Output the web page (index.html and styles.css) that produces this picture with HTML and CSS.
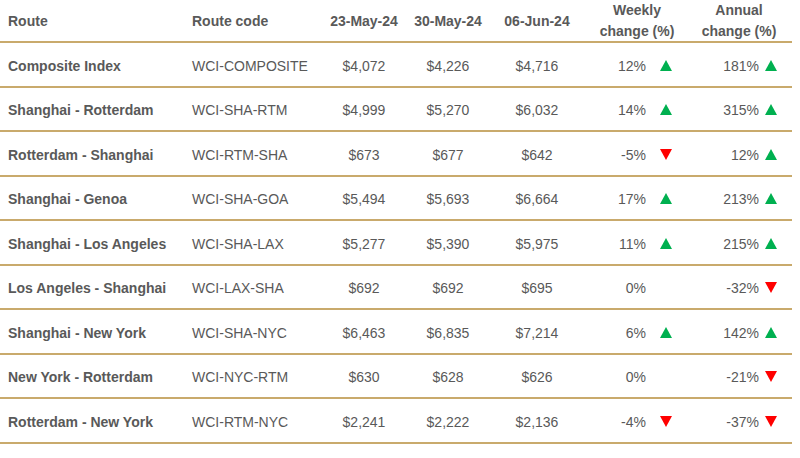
FILE: index.html
```html
<!DOCTYPE html>
<html lang="en">
<head>
<meta charset="utf-8">
<title>WCI routes</title>
<link rel="stylesheet" href="styles.css">
</head>
<body>
<div class="table">
  <div class="row head">
    <div class="c route">Route</div>
    <div class="c code">Route code</div>
    <div class="c num">23-May-24</div>
    <div class="c num">30-May-24</div>
    <div class="c num">06-Jun-24</div>
    <div class="c hc">Weekly<br>change (%)</div>
    <div class="c hc">Annual<br>change (%)</div>
  </div>

  <div class="row">
    <div class="c route">Composite Index</div>
    <div class="c code">WCI-COMPOSITE</div>
    <div class="c num">$4,072</div><div class="c num">$4,226</div><div class="c num">$4,716</div>
    <div class="c wk">12%<span class="tri up"></span></div>
    <div class="c an">181%<span class="tri up"></span></div>
  </div>
  <div class="row">
    <div class="c route">Shanghai - Rotterdam</div>
    <div class="c code">WCI-SHA-RTM</div>
    <div class="c num">$4,999</div><div class="c num">$5,270</div><div class="c num">$6,032</div>
    <div class="c wk">14%<span class="tri up"></span></div>
    <div class="c an">315%<span class="tri up"></span></div>
  </div>
  <div class="row">
    <div class="c route">Rotterdam - Shanghai</div>
    <div class="c code">WCI-RTM-SHA</div>
    <div class="c num">$673</div><div class="c num">$677</div><div class="c num">$642</div>
    <div class="c wk">-5%<span class="tri down"></span></div>
    <div class="c an">12%<span class="tri up"></span></div>
  </div>
  <div class="row">
    <div class="c route">Shanghai - Genoa</div>
    <div class="c code">WCI-SHA-GOA</div>
    <div class="c num">$5,494</div><div class="c num">$5,693</div><div class="c num">$6,664</div>
    <div class="c wk">17%<span class="tri up"></span></div>
    <div class="c an">213%<span class="tri up"></span></div>
  </div>
  <div class="row">
    <div class="c route">Shanghai - Los Angeles</div>
    <div class="c code">WCI-SHA-LAX</div>
    <div class="c num">$5,277</div><div class="c num">$5,390</div><div class="c num">$5,975</div>
    <div class="c wk">11%<span class="tri up"></span></div>
    <div class="c an">215%<span class="tri up"></span></div>
  </div>
  <div class="row">
    <div class="c route">Los Angeles - Shanghai</div>
    <div class="c code">WCI-LAX-SHA</div>
    <div class="c num">$692</div><div class="c num">$692</div><div class="c num">$695</div>
    <div class="c wk">0%<span class="tri none"></span></div>
    <div class="c an">-32%<span class="tri down"></span></div>
  </div>
  <div class="row">
    <div class="c route">Shanghai - New York</div>
    <div class="c code">WCI-SHA-NYC</div>
    <div class="c num">$6,463</div><div class="c num">$6,835</div><div class="c num">$7,214</div>
    <div class="c wk">6%<span class="tri up"></span></div>
    <div class="c an">142%<span class="tri up"></span></div>
  </div>
  <div class="row">
    <div class="c route">New York - Rotterdam</div>
    <div class="c code">WCI-NYC-RTM</div>
    <div class="c num">$630</div><div class="c num">$628</div><div class="c num">$626</div>
    <div class="c wk">0%<span class="tri none"></span></div>
    <div class="c an">-21%<span class="tri down"></span></div>
  </div>
  <div class="row">
    <div class="c route">Rotterdam - New York</div>
    <div class="c code">WCI-RTM-NYC</div>
    <div class="c num">$2,241</div><div class="c num">$2,222</div><div class="c num">$2,136</div>
    <div class="c wk">-4%<span class="tri down"></span></div>
    <div class="c an">-37%<span class="tri down"></span></div>
  </div>
</div>
</body>
</html>
```

FILE: styles.css
```css
html, body {
  margin: 0;
  padding: 0;
  background: #ffffff;
}
body {
  font-family: "Liberation Sans", Arial, sans-serif;
  font-size: 14px;
  color: #595959;
}
.table {
  width: 792px;
}
.row {
  display: grid;
  grid-template-columns: 184px 134px 92px 76px 102px 98px 106px;
  align-items: center;
  height: 44.5px;
  padding-top: 3px;
  box-sizing: border-box;
  border-bottom: 2px solid #c9aa6c;
}
.row.head {
  height: 43px;
  padding-top: 0;
  font-weight: bold;
  line-height: 21px;
}
.c {
  white-space: nowrap;
}
.route {
  padding-left: 8px;
  font-weight: bold;
}
.code {
  padding-left: 8px;
}
.num, .hc {
  text-align: center;
}
.wk, .an {
  display: flex;
  justify-content: flex-end;
  align-items: center;
}
.wk {
  padding-right: 14px;
}
.an {
  padding-right: 15px;
}
.tri {
  display: inline-block;
  width: 0;
  height: 0;
  border-left: 6px solid transparent;
  border-right: 6px solid transparent;
  margin-top: -1px;
}
.wk .tri { margin-left: 14px; }
.an .tri { margin-left: 6px; }
.tri.up {
  border-bottom: 11px solid #00b050;
}
.tri.down {
  border-top: 11px solid #ff0000;
}
.tri.none {
  border-top: 11px solid transparent;
}
```
